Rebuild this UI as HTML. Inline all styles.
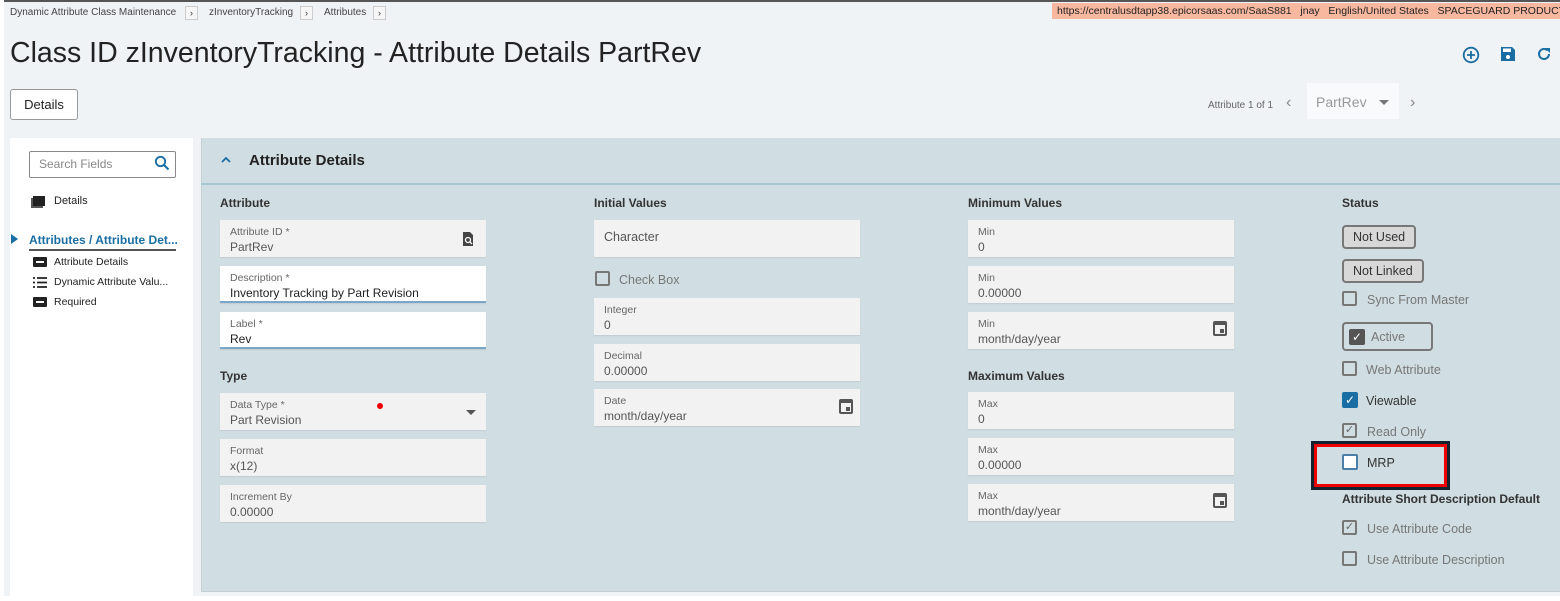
<!DOCTYPE html>
<html><head><style>
*{box-sizing:border-box;margin:0;padding:0}
body{width:1560px;height:601px;background:#fff;font-family:"Liberation Sans",sans-serif;position:relative;overflow:hidden;color:#333}
.a{position:absolute;white-space:nowrap}
.f{position:absolute;background:#f2f2f2;height:37px;width:266px;box-shadow:0 1px 1px rgba(0,0,0,.08)}
.f .l{position:absolute;left:10px;top:6px;font-size:10.5px;color:#666}
.f .v{position:absolute;left:10px;top:20px;font-size:12px;color:#555}
.w{background:#fff;border-bottom:2px solid #7aa7c7}
.w .v{color:#222}
.h{position:absolute;font-size:12px;font-weight:bold;color:#333}
.cb{position:absolute;width:15px;height:15px;border:2px solid #777;border-radius:2px;background:transparent}
.ck{position:absolute;font-size:12.5px;color:#777}
.btn{position:absolute;border:2px solid #777;border-radius:4px;background:#d8d8d8;font-size:12.5px;color:#333;padding:3px 9px}
.cal{position:absolute;width:14px;height:15px;border:2px solid #555;border-top-width:4px;border-radius:2px}
.cal:after{content:"";position:absolute;right:1px;bottom:1px;width:4px;height:4px;background:#555}
</style></head><body>
<div class="a" style="left:4px;top:0;width:1556px;height:596px;background:#eff3f6"></div>
<div class="a" style="left:4px;top:0;width:1556px;height:2px;background:#555"></div>
<div class="a" style="left:10px;top:7px;font-size:10px;color:#444">Dynamic Attribute Class Maintenance</div>
<div class="a" style="left:185px;top:6px;width:13px;height:14px;border:1px solid #ccc;background:#f6f6f6;font-size:9px;text-align:center;line-height:12px">›</div>
<div class="a" style="left:209px;top:7px;font-size:10px;color:#444">zInventoryTracking</div>
<div class="a" style="left:300px;top:6px;width:13px;height:14px;border:1px solid #ccc;background:#f6f6f6;font-size:9px;text-align:center;line-height:12px">›</div>
<div class="a" style="left:324px;top:7px;font-size:10px;color:#444">Attributes</div>
<div class="a" style="left:373px;top:6px;width:13px;height:14px;border:1px solid #ccc;background:#f6f6f6;font-size:9px;text-align:center;line-height:12px">›</div>
<div class="a" style="left:1052px;top:3px;width:508px;height:16px;background:#f8b8a0;font-size:10.5px;color:#222;padding:2px 0 0 5px;overflow:hidden">https://centralusdtapp38.epicorsaas.com/SaaS881 &nbsp; jnay &nbsp; English/United States &nbsp; SPACEGUARD PRODUCTS INC</div>
<div class="a" style="left:10px;top:37px;font-size:28.5px;color:#222">Class ID zInventoryTracking - Attribute Details PartRev</div>
<svg class="a" style="left:1462px;top:46px" width="18" height="18" viewBox="0 0 18 18"><circle cx="9" cy="9" r="7.3" fill="none" stroke="#1a6ea3" stroke-width="1.8"/><path d="M9 5v8M5 9h8" stroke="#1a6ea3" stroke-width="1.8"/></svg>
<svg class="a" style="left:1500px;top:46px" width="16" height="16" viewBox="0 0 16 16"><path d="M1 1h11l3 3v11H1z" fill="#1a6ea3"/><rect x="3" y="2.5" width="8" height="3.5" fill="#fff"/><circle cx="8" cy="11" r="2" fill="#fff"/></svg>
<svg class="a" style="left:1536px;top:46px" width="16" height="16" viewBox="0 0 16 16"><path d="M13 8a5 5 0 1 1-1.5-3.6" fill="none" stroke="#1a6ea3" stroke-width="2"/><path d="M9 2h5v5z" fill="#1a6ea3"/></svg>
<div class="a" style="left:10px;top:89px;width:68px;height:31px;border:1px solid #999;border-radius:3px;background:#fff;font-size:13px;text-align:center;line-height:29px;color:#222">Details</div>
<div class="a" style="left:1208px;top:100px;font-size:10px;color:#666">Attribute 1 of 1</div>
<div class="a" style="left:1286px;top:94px;font-size:16px;color:#888">‹</div>
<div class="a" style="left:1307px;top:83px;width:92px;height:36px;background:#f8fafb"></div>
<div class="a" style="left:1316px;top:94px;font-size:14px;color:#999">PartRev</div>
<div class="a" style="left:1379px;top:100px;border:5px solid transparent;border-top:5px solid #777"></div>
<div class="a" style="left:1410px;top:94px;font-size:16px;color:#888">›</div>

<div class="a" style="left:10px;top:138px;width:183px;height:458px;background:#fff"></div>
<div class="a" style="left:29px;top:151px;width:147px;height:27px;border:1px solid #888;border-radius:2px;background:#fff"></div>
<div class="a" style="left:39px;top:157px;font-size:12px;color:#888">Search Fields</div>
<svg class="a" style="left:154px;top:155px" width="16" height="16" viewBox="0 0 16 16"><circle cx="6.5" cy="6.5" r="4.7" fill="none" stroke="#1a6ea3" stroke-width="1.8"/><path d="M10 10l4.5 4.5" stroke="#1a6ea3" stroke-width="2"/></svg>
<div class="a" style="left:33px;top:196px;width:12px;height:10px;background:#222;box-shadow:-2px 2px 0 #555"></div>
<div class="a" style="left:54px;top:195px;font-size:11px;color:#222">Details</div>
<div class="a" style="left:11px;top:234px;border:5px solid transparent;border-left:7px solid #1a6ea3;border-right:0"></div>
<div class="a" style="left:29px;top:233px;font-size:12px;color:#1a6ea3;font-weight:bold;width:147px;border-bottom:2px solid #555;padding-bottom:2px">Attributes / Attribute Det...</div>
<div class="a" style="left:33px;top:257px;width:14px;height:10px;background:#222;border-radius:1px"><div style="margin:4px 3px;height:2px;background:#fff"></div></div>
<div class="a" style="left:54px;top:256px;font-size:10.5px;color:#222">Attribute Details</div>
<svg class="a" style="left:33px;top:277px" width="14" height="11" viewBox="0 0 14 11"><path d="M0 1h2M4 1h10M0 5.5h2M4 5.5h10M0 10h2M4 10h10" stroke="#222" stroke-width="1.8"/></svg>
<div class="a" style="left:54px;top:276px;font-size:10.5px;color:#222">Dynamic Attribute Valu...</div>
<div class="a" style="left:33px;top:297px;width:14px;height:10px;background:#222;border-radius:1px"><div style="margin:4px 3px;height:2px;background:#fff"></div></div>
<div class="a" style="left:54px;top:296px;font-size:10.5px;color:#222">Required</div>

<div class="a" style="left:201px;top:138px;width:1359px;height:454px;background:#d0dde2;border-left:1px solid #c4d0d5;border-bottom:1px solid #c4ccd0"></div>
<div class="a" style="left:201px;top:183px;width:1359px;height:2px;background:#a9c6d3"></div>
<svg class="a" style="left:220px;top:156px" width="12" height="8" viewBox="0 0 12 8"><path d="M2 6l4-4 4 4" fill="none" stroke="#1a6ea3" stroke-width="1.8"/></svg>
<div class="a" style="left:249px;top:152px;font-size:15px;font-weight:bold;color:#222">Attribute Details</div>

<div class="h" style="left:220px;top:196px">Attribute</div>
<div class="f" style="left:220px;top:220px"><span class="l">Attribute ID *</span><span class="v">PartRev</span><svg style="position:absolute;right:12px;top:12px" width="12" height="14" viewBox="0 0 12 14"><path d="M1 0h7l3 3v11H1z" fill="#444"/><circle cx="6" cy="8" r="2.5" fill="none" stroke="#fff" stroke-width="1.3"/><path d="M8 10l2 2" stroke="#fff" stroke-width="1.3"/></svg></div>
<div class="f w" style="left:220px;top:266px"><span class="l">Description *</span><span class="v">Inventory Tracking by Part Revision</span></div>
<div class="f w" style="left:220px;top:312px"><span class="l">Label *</span><span class="v">Rev</span></div>
<div class="h" style="left:220px;top:369px">Type</div>
<div class="f" style="left:220px;top:393px"><span class="l">Data Type *</span><span class="v">Part Revision</span><div style="position:absolute;left:157px;top:10px;width:6px;height:6px;border-radius:50%;background:#e00"></div><div style="position:absolute;right:10px;top:17px;border:5px solid transparent;border-top:5px solid #555"></div></div>
<div class="f" style="left:220px;top:439px"><span class="l">Format</span><span class="v">x(12)</span></div>
<div class="f" style="left:220px;top:485px"><span class="l">Increment By</span><span class="v">0.00000</span></div>

<div class="h" style="left:594px;top:196px">Initial Values</div>
<div class="f" style="left:594px;top:220px"><span class="v" style="top:10px;font-size:12.5px">Character</span></div>
<div class="cb" style="left:595px;top:271px"></div><div class="ck" style="left:619px;top:273px">Check Box</div>
<div class="f" style="left:594px;top:298px"><span class="l">Integer</span><span class="v">0</span></div>
<div class="f" style="left:594px;top:344px"><span class="l">Decimal</span><span class="v">0.00000</span></div>
<div class="f" style="left:594px;top:389px"><span class="l">Date</span><span class="v">month/day/year</span><div class="cal" style="right:7px;top:10px"></div></div>

<div class="h" style="left:968px;top:196px">Minimum Values</div>
<div class="f" style="left:968px;top:220px"><span class="l">Min</span><span class="v">0</span></div>
<div class="f" style="left:968px;top:266px"><span class="l">Min</span><span class="v">0.00000</span></div>
<div class="f" style="left:968px;top:312px"><span class="l">Min</span><span class="v">month/day/year</span><div class="cal" style="right:7px;top:9px"></div></div>
<div class="h" style="left:968px;top:369px">Maximum Values</div>
<div class="f" style="left:968px;top:392px"><span class="l">Max</span><span class="v">0</span></div>
<div class="f" style="left:968px;top:438px"><span class="l">Max</span><span class="v">0.00000</span></div>
<div class="f" style="left:968px;top:484px"><span class="l">Max</span><span class="v">month/day/year</span><div class="cal" style="right:7px;top:9px"></div></div>

<div class="h" style="left:1342px;top:196px">Status</div>
<div class="btn" style="left:1342px;top:225px">Not Used</div>
<div class="btn" style="left:1342px;top:259px">Not Linked</div>
<div class="cb" style="left:1342px;top:291px"></div><div class="ck" style="left:1367px;top:293px">Sync From Master</div>
<div class="a" style="left:1342px;top:322px;width:91px;height:29px;border:2px solid #777;border-radius:4px"></div>
<div class="a" style="left:1349px;top:329px;width:16px;height:16px;background:#555;border-radius:2px;color:#fff;font-size:12px;text-align:center;line-height:16px">✓</div>
<div class="ck" style="left:1371px;top:330px">Active</div>
<div class="cb" style="left:1342px;top:361px"></div><div class="ck" style="left:1366px;top:363px">Web Attribute</div>
<div class="a" style="left:1342px;top:392px;width:16px;height:16px;background:#1a6ea3;border-radius:2px;color:#fff;font-size:12px;text-align:center;line-height:16px">✓</div>
<div class="ck" style="left:1366px;top:394px;color:#333">Viewable</div>
<div class="cb" style="left:1342px;top:423px;color:#666;font-size:11px;line-height:11px;text-align:center">✓</div><div class="ck" style="left:1367px;top:425px">Read Only</div>
<div class="a" style="left:1311px;top:441px;width:139px;height:49px;border:3px solid #13222e"></div>
<div class="a" style="left:1314px;top:444px;width:133px;height:43px;border:3px solid #e00"></div>
<div class="a" style="left:1342px;top:454px;width:16px;height:16px;border:2px solid #4a7fa8;background:#fff;border-radius:2px"></div>
<div class="ck" style="left:1367px;top:456px;color:#333">MRP</div>
<div class="h" style="left:1342px;top:492px">Attribute Short Description Default</div>
<div class="cb" style="left:1342px;top:520px;color:#666;font-size:11px;line-height:11px;text-align:center">✓</div><div class="ck" style="left:1367px;top:522px">Use Attribute Code</div>
<div class="cb" style="left:1342px;top:551px"></div><div class="ck" style="left:1367px;top:553px">Use Attribute Description</div>
</body></html>
